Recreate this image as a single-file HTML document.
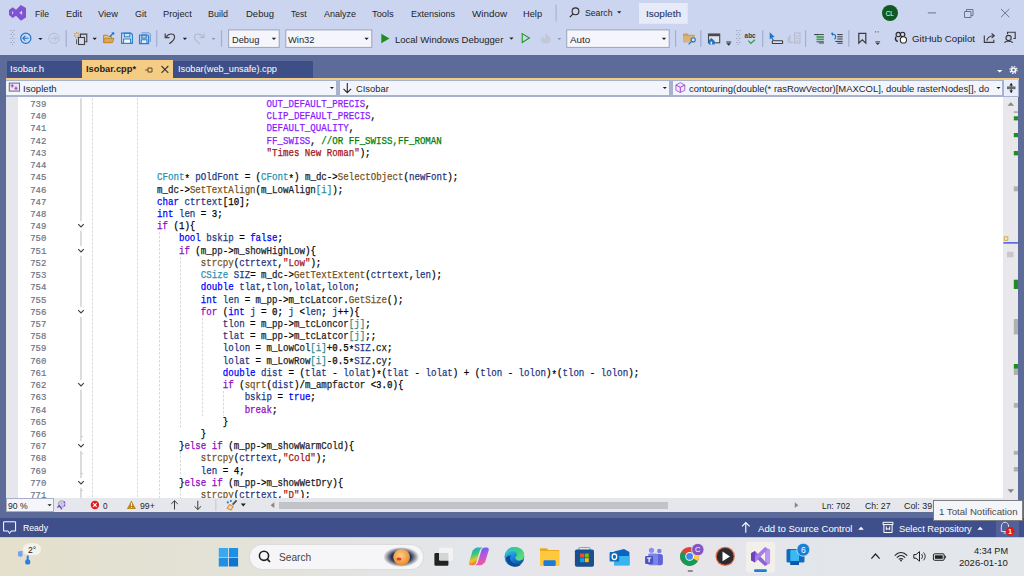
<!DOCTYPE html>
<html><head><meta charset="utf-8"><style>
*{margin:0;padding:0;box-sizing:border-box}
html,body{width:1024px;height:576px;overflow:hidden;background:#ccd5f0;position:relative;font-family:"Liberation Sans",sans-serif}
.a{position:absolute}
#t14{-webkit-text-stroke:0.12px #2a3768}
.t{position:absolute;white-space:pre;line-height:1;transform-origin:0 0;font-family:"Liberation Sans",sans-serif}
#code{position:absolute;left:156.6px;top:98.3px;width:846px;height:399.7px;overflow:visible}
.cl{position:absolute;left:0;white-space:pre;font-family:"Liberation Mono",monospace;font-size:10.2px;line-height:12.2222px;height:12.2222px;color:#000;transform:scaleX(0.89575);transform-origin:0 0;-webkit-text-stroke:0.25px currentColor}
.cl b{font-weight:400}
.cl i{font-style:normal;position:relative;top:2px}
.cl b.mac{color:#8a1bff}
.cl b.com{color:#008000}
.cl b.str{color:#a31515}
.cl b.typ{color:#2b91af}
.cl b.loc{color:#1f377f}
.cl b.mem{color:#1c1c28}
.cl b.fn{color:#74531f}
.cl b.kw{color:#0000ff}
.cl b.ctl{color:#8f08c4}
.cl b.par{color:#2e8b8b}

.ln{position:absolute;right:0;white-space:pre;font-family:"Liberation Mono",monospace;font-size:9.6px;transform:scaleX(0.93229);transform-origin:100% 0;-webkit-text-stroke:0.2px currentColor;line-height:12.2222px;height:12.2222px;color:#6e7484}
</style></head>
<body>
<!-- top area -->
<div class="a" style="left:0;top:0;width:1024px;height:55px;background:#ccd5f0"></div>
<!-- tab well -->
<div class="a" style="left:0;top:55px;width:1024px;height:463px;background:#5d6b99"></div>
<div class="a" style="left:7px;top:60.5px;width:75px;height:17.5px;background:#3e4f88"></div>
<div class="a" style="left:173.3px;top:60.5px;width:140px;height:17.5px;background:#3e4f88"></div>
<div class="a" style="left:81.8px;top:60px;width:91.5px;height:18px;background:#f5cc84"></div>
<div class="a" style="left:6px;top:77.8px;width:1012.5px;height:1.8px;background:#f5cc84"></div>
<!-- nav bar -->
<div class="a" style="left:6px;top:79.6px;width:1012.5px;height:17.8px;background:#a9b2cc"></div>
<div class="a" style="left:6px;top:80.6px;width:330.2px;height:14.8px;background:#f3f5fc"></div>
<div class="a" style="left:339.7px;top:80.6px;width:329.3px;height:14.8px;background:#f3f5fc"></div>
<div class="a" style="left:672.8px;top:80.6px;width:329.5px;height:14.8px;background:#f3f5fc"></div>
<div class="a" style="left:1003.8px;top:79.6px;width:14.5px;height:16.4px;background:#e8edfb"></div>
<!-- editor -->
<div class="a" style="left:6px;top:97.4px;width:997.4px;height:400.6px;background:#ffffff"></div>
<div class="a" style="left:6px;top:97.4px;width:12px;height:400.6px;background:#e6e7ed"></div>
<div class="a" style="left:1003.4px;top:97.4px;width:14.8px;height:400.6px;background:#e8e8ec"></div>
<div class="a" style="left:0;top:98.3px;width:46.3px;height:400px"><div class="ln" style="top:0.700px">739</div>
<div class="ln" style="top:12.700px">740</div>
<div class="ln" style="top:24.700px">741</div>
<div class="ln" style="top:37.700px">742</div>
<div class="ln" style="top:49.700px">743</div>
<div class="ln" style="top:61.700px">744</div>
<div class="ln" style="top:73.700px">745</div>
<div class="ln" style="top:86.700px">746</div>
<div class="ln" style="top:98.700px">747</div>
<div class="ln" style="top:110.700px">748</div>
<div class="ln" style="top:122.700px">749</div>
<div class="ln" style="top:134.700px">750</div>
<div class="ln" style="top:147.700px">751</div>
<div class="ln" style="top:159.700px">752</div>
<div class="ln" style="top:171.700px">753</div>
<div class="ln" style="top:183.700px">754</div>
<div class="ln" style="top:196.700px">755</div>
<div class="ln" style="top:208.700px">756</div>
<div class="ln" style="top:220.700px">757</div>
<div class="ln" style="top:232.700px">758</div>
<div class="ln" style="top:244.700px">759</div>
<div class="ln" style="top:257.700px">760</div>
<div class="ln" style="top:269.700px">761</div>
<div class="ln" style="top:281.700px">762</div>
<div class="ln" style="top:293.700px">763</div>
<div class="ln" style="top:306.700px">764</div>
<div class="ln" style="top:318.700px">765</div>
<div class="ln" style="top:330.700px">766</div>
<div class="ln" style="top:342.700px">767</div>
<div class="ln" style="top:354.700px">768</div>
<div class="ln" style="top:367.700px">769</div>
<div class="ln" style="top:379.700px">770</div>
<div class="ln" style="top:391.700px">771</div></div>
<div id="code"><div class="cl" style="top:0.700px">                    <b class="mac">OUT_DEFAULT_PRECIS</b>,</div>
<div class="cl" style="top:12.700px">                    <b class="mac">CLIP_DEFAULT_PRECIS</b>,</div>
<div class="cl" style="top:24.700px">                    <b class="mac">DEFAULT_QUALITY</b>,</div>
<div class="cl" style="top:37.700px">                    <b class="mac">FF_SWISS</b>, <b class="com">//OR FF_SWISS,FF_ROMAN</b></div>
<div class="cl" style="top:49.700px">                    <b class="str">"Times New Roman"</b>);</div>
<div class="cl" style="top:61.700px"></div>
<div class="cl" style="top:73.700px"><b class="typ">CFont</b><i>*</i> <b class="loc">pOldFont</b> = (<b class="typ">CFont</b><i>*</i>) <b class="mem">m_dc</b>-&gt;<b class="fn">SelectObject</b>(<b class="loc">newFont</b>);</div>
<div class="cl" style="top:86.700px"><b class="mem">m_dc</b>-&gt;<b class="fn">SetTextAlign</b>(<b class="mem">m_LowAlign</b><b class="par">[i]</b>);</div>
<div class="cl" style="top:98.700px"><b class="kw">char</b> <b class="loc">ctrtext</b>[10];</div>
<div class="cl" style="top:110.700px"><b class="kw">int</b> <b class="loc">len</b> = 3;</div>
<div class="cl" style="top:122.700px"><b class="ctl">if</b> (1){</div>
<div class="cl" style="top:134.700px">    <b class="kw">bool</b> <b class="loc">bskip</b> = <b class="kw">false</b>;</div>
<div class="cl" style="top:147.700px">    <b class="ctl">if</b> (<b class="mem">m_pp</b>-&gt;<b class="mem">m_showHighLow</b>){</div>
<div class="cl" style="top:159.700px">        <b class="fn">strcpy</b>(<b class="loc">ctrtext</b>,<b class="str">"Low"</b>);</div>
<div class="cl" style="top:171.700px">        <b class="typ">CSize</b> <b class="loc">SIZ</b>= <b class="mem">m_dc</b>-&gt;<b class="fn">GetTextExtent</b>(<b class="loc">ctrtext</b>,<b class="loc">len</b>);</div>
<div class="cl" style="top:183.700px">        <b class="kw">double</b> <b class="loc">tlat</b>,<b class="loc">tlon</b>,<b class="loc">lolat</b>,<b class="loc">lolon</b>;</div>
<div class="cl" style="top:196.700px">        <b class="kw">int</b> <b class="loc">len</b> = <b class="mem">m_pp</b>-&gt;<b class="mem">m_tcLatcor</b>.<b class="fn">GetSize</b>();</div>
<div class="cl" style="top:208.700px">        <b class="ctl">for</b> (<b class="kw">int</b> <b class="loc">j</b> = 0; <b class="loc">j</b> &lt;<b class="loc">len</b>; <b class="loc">j</b>++){</div>
<div class="cl" style="top:220.700px">            <b class="loc">tlon</b> = <b class="mem">m_pp</b>-&gt;<b class="mem">m_tcLoncor</b><b class="par">[j]</b>;</div>
<div class="cl" style="top:232.700px">            <b class="loc">tlat</b> = <b class="mem">m_pp</b>-&gt;<b class="mem">m_tcLatcor</b><b class="par">[j]</b>;;</div>
<div class="cl" style="top:244.700px">            <b class="loc">lolon</b> = <b class="mem">m_LowCol</b><b class="par">[i]</b>+0.5<i>*</i><b class="loc">SIZ</b>.<b class="mem">cx</b>;</div>
<div class="cl" style="top:257.700px">            <b class="loc">lolat</b> = <b class="mem">m_LowRow</b><b class="par">[i]</b>-0.5<i>*</i><b class="loc">SIZ</b>.<b class="mem">cy</b>;</div>
<div class="cl" style="top:269.700px">            <b class="kw">double</b> <b class="loc">dist</b> = (<b class="loc">tlat</b> - <b class="loc">lolat</b>)<i>*</i>(<b class="loc">tlat</b> - <b class="loc">lolat</b>) + (<b class="loc">tlon</b> - <b class="loc">lolon</b>)<i>*</i>(<b class="loc">tlon</b> - <b class="loc">lolon</b>);</div>
<div class="cl" style="top:281.700px">            <b class="ctl">if</b> (<b class="fn">sqrt</b>(<b class="loc">dist</b>)/<b class="mem">m_ampfactor</b> &lt;3.0){</div>
<div class="cl" style="top:293.700px">                <b class="loc">bskip</b> = <b class="kw">true</b>;</div>
<div class="cl" style="top:306.700px">                <b class="ctl">break</b>;</div>
<div class="cl" style="top:318.700px">            }</div>
<div class="cl" style="top:330.700px">        }</div>
<div class="cl" style="top:342.700px">    }<b class="ctl">else</b> <b class="ctl">if</b> (<b class="mem">m_pp</b>-&gt;<b class="mem">m_showWarmCold</b>){</div>
<div class="cl" style="top:354.700px">        <b class="fn">strcpy</b>(<b class="loc">ctrtext</b>,<b class="str">"Cold"</b>);</div>
<div class="cl" style="top:367.700px">        <b class="loc">len</b> = 4;</div>
<div class="cl" style="top:379.700px">    }<b class="ctl">else</b> <b class="ctl">if</b> (<b class="mem">m_pp</b>-&gt;<b class="mem">m_showWetDry</b>){</div>
<div class="cl" style="top:391.700px">        <b class="fn">strcpy</b>(<b class="loc">ctrtext</b>,<b class="str">"D"</b>);</div></div>
<!-- editor bottom bar -->
<div class="a" style="left:6px;top:498px;width:1012.3px;height:14px;background:#e6e7ed"></div>
<div class="a" style="left:6px;top:498px;width:47.6px;height:13.8px;background:#f5f6fc;border:1px solid #a8b0c8"></div>
<div class="a" style="left:279px;top:501.5px;width:389px;height:7.5px;background:#c2c3c9"></div>
<!-- status bar -->
<div class="a" style="left:0;top:517.6px;width:1024px;height:19.4px;background:#3f4f8c"></div>
<div class="a" style="left:995.5px;top:517.6px;width:23.5px;height:19.4px;background:#52619a"></div>
<!-- taskbar -->
<div class="a" style="left:0;top:537px;width:1024px;height:39px;background:linear-gradient(90deg,#e4e0cc 0%,#e3e2d6 20%,#e3e6ea 45%,#e8e5ea 60%,#e2e6ea 80%,#e4e7ea 100%)"></div>
<div class="a" style="left:0;top:537px;width:1024px;height:1px;background:#c9c8bc"></div>
<div class="a" style="left:250px;top:545px;width:172.5px;height:24px;border-radius:12px;background:#f6f5f7;box-shadow:0 0 0 1px #dcdcdc"></div>
<div class="a" style="left:746px;top:541.7px;width:29.3px;height:30.7px;border-radius:4px;background:#f0eef0"></div>
<!-- tooltip -->
<div class="a" style="left:933.3px;top:500.3px;width:89.8px;height:21px;background:#f4f5f8;border:1px solid #7e7e80"></div>
<svg class="a" style="left:0;top:0" width="1024" height="576" viewBox="0 0 1024 576"><path fill-rule="evenodd" fill="#8153d3" d="M20.8,5 L26,7.9 L26,17.4 L20.9,20.8 L16,15.8 L12.7,17.9 L9,15 L9,10 L12.7,7.2 L16,9.8 Z M12,11 L12,14.5 L13.6,12.8 Z M22.1,10.8 L22.1,14.9 L19.3,12.8 Z"/><rect x="555.6" y="4.5" width="1" height="17" fill="#a3add0"/><circle cx="575.5" cy="11.3" r="3.4" fill="none" stroke="#2b2b2b" stroke-width="1.1"/><path d="M573.1,13.8 L569.8,17.1" stroke="#2b2b2b" stroke-width="1.2"/><path d="M617.1,11.200000000000001 L621.3000000000001,11.200000000000001 L619.2,13.4 Z" fill="#1e1e1e"/><rect x="639" y="3" width="48.7" height="20.8" fill="#e6eaf9"/><circle cx="890" cy="13" r="8" fill="#0e5a22"/><text x="889.8" y="15.7" font-family="Liberation Sans" font-size="6.9" fill="#ffffff" text-anchor="middle" textLength="8" lengthAdjust="spacingAndGlyphs">CL</text><rect x="927.8" y="12.4" width="8.2" height="1" fill="#6a7390"/><path d="M964.5,11.5 h6.5 v6 h-6.5 Z M966.5,11.5 v-2 h6.5 v6 h-2" fill="none" stroke="#6a7390" stroke-width="1"/><path d="M1001,9 L1009.3,17.2 M1009.3,9 L1001,17.2" stroke="#6a7390" stroke-width="1"/><rect x="10.5" y="30" width="1" height="1" fill="#8890aa"/><rect x="13.5" y="30" width="1" height="1" fill="#8890aa"/><rect x="12.0" y="32" width="1" height="1" fill="#8890aa" fill-opacity="0.7"/><rect x="10.5" y="34" width="1" height="1" fill="#8890aa"/><rect x="13.5" y="34" width="1" height="1" fill="#8890aa"/><rect x="12.0" y="36" width="1" height="1" fill="#8890aa" fill-opacity="0.7"/><rect x="10.5" y="38" width="1" height="1" fill="#8890aa"/><rect x="13.5" y="38" width="1" height="1" fill="#8890aa"/><rect x="12.0" y="40" width="1" height="1" fill="#8890aa" fill-opacity="0.7"/><rect x="10.5" y="42" width="1" height="1" fill="#8890aa"/><rect x="13.5" y="42" width="1" height="1" fill="#8890aa"/><rect x="12.0" y="44" width="1" height="1" fill="#8890aa" fill-opacity="0.7"/><circle cx="25.8" cy="38.3" r="5.1" fill="none" stroke="#1f74c8" stroke-width="1.2"/><path d="M28.6,38.3 H23 M25.3,35.9 L22.9,38.3 L25.3,40.7" fill="none" stroke="#1f74c8" stroke-width="1.1"/><path d="M38.199999999999996,37.9 L42.6,37.9 L40.4,40.1 Z" fill="#1e1e1e"/><circle cx="53.9" cy="38.3" r="5.1" fill="none" stroke="#b6bccf" stroke-width="1"/><path d="M51.2,38.3 H56.6 M54.5,35.9 L56.9,38.3 L54.5,40.7" fill="none" stroke="#b6bccf" stroke-width="1"/><rect x="65.60000000000001" y="30.2" width="1.2" height="16.599999999999998" fill="#a3add0"/><circle cx="76.8" cy="35.1" r="2.2" fill="none" stroke="#d8a050" stroke-width="1.6" stroke-dasharray="1.1 0.6"/><circle cx="76.8" cy="35.1" r="0.7" fill="#ccd5f0"/><path d="M80.5,37 V34.1 H86.8 V41.7 H84.6" fill="none" stroke="#424242" stroke-width="1.1"/><rect x="78.5" y="37.5" width="6" height="7" fill="#d8dcea" stroke="#424242" stroke-width="1.1"/><path d="M76.6,39.2 V44.2" stroke="#5a5a5a" stroke-width="1"/><path d="M92.5,37.8 L96.9,37.8 L94.7,40.0 Z" fill="#1e1e1e"/><path d="M103.6,35.2 H107.3 L108.4,36.4 H111.3 V42.6 H103.6 Z" fill="#e3c08a" stroke="#c08428" stroke-width="1"/><path d="M104.4,38.3 H114 L112.6,42.6 H103.6 Z" fill="#d9a85a" stroke="#c08428" stroke-width="0.9"/><path d="M110,36.5 L113.2,33.2" stroke="#1f74c8" stroke-width="1.2"/><path d="M111.3,32.4 L114.3,32.2 L114.1,35.2 Z" fill="#1f74c8"/><path d="M121.6,33.1 H131 L132.4,34.5 V43.4 H121.6 Z" fill="#d5e2f4" stroke="#2b7bc8" stroke-width="1.1"/><rect x="124.3" y="33.2" width="5.6" height="3.6" fill="none" stroke="#2b7bc8" stroke-width="1"/><rect x="123.6" y="39" width="7" height="4.3" fill="#f4f7fc" stroke="#2b7bc8" stroke-width="1"/><path d="M141.5,32.9 H149.4 L150.3,33.8 V42 " fill="none" stroke="#5e9ad6" stroke-width="1"/><path d="M139.5,35 H147.5 L148.6,36.1 V43.6 H139.5 Z" fill="#b9d0ee" stroke="#2b7bc8" stroke-width="1.1"/><rect x="141.8" y="35.1" width="4.4" height="3" fill="none" stroke="#2b7bc8" stroke-width="1"/><rect x="141.3" y="39.8" width="5.6" height="3.6" fill="#eaf1fa" stroke="#2b7bc8" stroke-width="1"/><rect x="156.1" y="30.2" width="1.2" height="16.599999999999998" fill="#a3add0"/><path d="M166.2,37 C168.5,33.2 174.6,32.8 174.6,37.2 C174.6,39.4 172.5,41.5 169.3,43.8" fill="none" stroke="#424242" stroke-width="1.2"/><path d="M165.2,33.5 V37.6 H169.5" fill="none" stroke="#424242" stroke-width="1.2"/><path d="M182.75,37.85 L187.05,37.85 L184.9,39.949999999999996 Z" fill="#1e1e1e"/><path d="M202.9,37 C200.6,33.2 194.5,32.8 194.5,37.2 C194.5,39.4 196.6,41.5 199.8,43.8" fill="none" stroke="#b3b8ca" stroke-width="1.1"/><path d="M203.9,33.5 V37.6 H199.6" fill="none" stroke="#b3b8ca" stroke-width="1.1"/><path d="M211.5,37.9 L215.5,37.9 L213.5,39.9 Z" fill="#9096aa"/><rect x="220.9" y="30.2" width="1.2" height="16.599999999999998" fill="#a3add0"/><rect x="228.6" y="29.9" width="50.599999999999994" height="17.5" fill="#f5f6fc" stroke="#9aa2bd" stroke-width="1"/><path d="M271.7,37.8 L276.09999999999997,37.8 L273.9,40.0 Z" fill="#1e1e1e"/><rect x="285.8" y="29.9" width="86.0" height="17.5" fill="#f5f6fc" stroke="#9aa2bd" stroke-width="1"/><path d="M364.40000000000003,37.8 L368.8,37.8 L366.6,40.0 Z" fill="#1e1e1e"/><rect x="566.75" y="29.9" width="102.45000000000005" height="17.5" fill="#f5f6fc" stroke="#9aa2bd" stroke-width="1"/><path d="M661.8,37.8 L666.2,37.8 L664,40.0 Z" fill="#1e1e1e"/><path d="M381.3,33.8 L389.5,38.5 L381.3,43.2 Z" fill="#1e8f1e"/><path d="M509.29999999999995,37.6 L513.5,37.6 L511.4,39.800000000000004 Z" fill="#1e1e1e"/><path d="M522.2,33.6 L529.4,38 L522.2,42.4 Z" fill="none" stroke="#1e9a1e" stroke-width="1.1"/><path d="M545.5,33.5 C550,36 552,39 550,42 C548.5,44 543,44 541.2,41.8 C539.5,39.5 541.5,37 543,36.2 C543,38 544,38.5 545,38.5 C545.5,37 545,35 545.5,33.5 Z" fill="#c3c8d6"/><path d="M557.4,37.9 L561.4,37.9 L559.4,39.9 Z" fill="#9096aa"/><rect x="675.0" y="30.2" width="1.2" height="16.599999999999998" fill="#a3add0"/><path d="M683.1,33.5 H687.5 L688.5,34.8 H694.9 V42.3 H683.1 Z" fill="#c9a060"/><path d="M683.1,36 H694.9 V42.3 H683.1 Z" fill="#d8b478"/><circle cx="693.2" cy="39.8" r="2.1" fill="#dbe3f3" stroke="#1f74c8" stroke-width="1.1"/><path d="M691.7,41.3 L688.6,44.4" stroke="#1f74c8" stroke-width="1.2"/><rect x="700.1999999999999" y="30.2" width="1.2" height="16.599999999999998" fill="#a3add0"/><rect x="708.5" y="34" width="11.2" height="8.8" fill="#dfe3ef" stroke="#4a4a4a" stroke-width="1.1"/><rect x="708.5" y="34" width="11.2" height="2.2" fill="#4a4a4a"/><path d="M707.9,41 L711.3,38 L714.7,41 V44.4 H708.9 V41 Z" fill="#1f74c8"/><rect x="710.5" y="41.6" width="1.6" height="2.8" fill="#dbe8f7"/><rect x="726.2" y="41.5" width="5" height="1" fill="#2b2b2b"/><path d="M726.4000000000001,43.3 L731.0,43.3 L728.7,45.7 Z" fill="#2b2b2b"/><rect x="736.3" y="30" width="1" height="1" fill="#8890aa"/><rect x="739.3" y="30" width="1" height="1" fill="#8890aa"/><rect x="737.8" y="32" width="1" height="1" fill="#8890aa" fill-opacity="0.7"/><rect x="736.3" y="34" width="1" height="1" fill="#8890aa"/><rect x="739.3" y="34" width="1" height="1" fill="#8890aa"/><rect x="737.8" y="36" width="1" height="1" fill="#8890aa" fill-opacity="0.7"/><rect x="736.3" y="38" width="1" height="1" fill="#8890aa"/><rect x="739.3" y="38" width="1" height="1" fill="#8890aa"/><rect x="737.8" y="40" width="1" height="1" fill="#8890aa" fill-opacity="0.7"/><rect x="736.3" y="42" width="1" height="1" fill="#8890aa"/><rect x="739.3" y="42" width="1" height="1" fill="#8890aa"/><rect x="737.8" y="44" width="1" height="1" fill="#8890aa" fill-opacity="0.7"/><text x="744.6" y="38.2" font-family="Liberation Sans" font-weight="700" font-size="6.3" fill="#3a3a3a" textLength="11" lengthAdjust="spacingAndGlyphs">abc</text><path d="M748.3,40.6 L750.8,43.3 L755,39.8" fill="none" stroke="#2ea043" stroke-width="1.2"/><rect x="762.1" y="30.2" width="1.2" height="16.599999999999998" fill="#a3add0"/><path d="M769.7,32.3 L774.8,37 L772.3,37.3 L773.8,39.8 L772.6,40.3 L771.2,37.9 L769.7,39.4 Z" fill="#1f74c8"/><rect x="772.3" y="40.7" width="10.3" height="2.8" rx="0.6" fill="#dfe3ef" stroke="#3a3a3a" stroke-width="1.1"/><path d="M790,35 V42.5 H793.5 M788.2,37 V42.8" fill="none" stroke="#b4b9cb" stroke-width="1.1"/><rect x="794.5" y="33" width="5.5" height="10" fill="none" stroke="#b4b9cb" stroke-width="1"/><path d="M795.5,36 H799 M795.5,38.5 H799 M795.5,41 H799" stroke="#b4b9cb" stroke-width="0.9"/><rect x="805.0" y="30.2" width="1.2" height="16.599999999999998" fill="#a3add0"/><path d="M814.2,34.6 H818.5" stroke="#3a3a3a" stroke-width="1"/><rect x="816.5" y="36.2" width="7.4" height="1.6" fill="#2ea043"/><rect x="816.5" y="38.6" width="7.4" height="1.6" fill="#2ea043"/><path d="M816.5,41.8 H823.9 M819,43 H823.9" stroke="#3a3a3a" stroke-width="0.9"/><path d="M816.5,34.6 H823.9" stroke="#3a3a3a" stroke-width="0.9"/><path d="M832,34.6 C835.8,33.5 836.8,37 834.5,39.2" fill="none" stroke="#1f74c8" stroke-width="1.2"/><path d="M830.8,33 L833.2,32.6 L832.8,36 Z" fill="#1f74c8"/><path d="M837.3,34.6 H842.7 M837.3,36.8 H842.7 M837.3,39 H842.7 M835.3,41.4 H842.7 M837.3,43.2 H842.7" stroke="#3a3a3a" stroke-width="1"/><rect x="848.1999999999999" y="30.2" width="1.2" height="16.599999999999998" fill="#a3add0"/><path d="M858.8,33.3 H865.8 V43.2 L862.3,39.8 L858.8,43.2 Z" fill="none" stroke="#3a3a3a" stroke-width="1.2"/><rect x="875.2" y="31.4" width="1" height="1" fill="#3a3a3a"/><rect x="877.6" y="31.4" width="1" height="1" fill="#3a3a3a"/><rect x="875.3" y="41.4" width="4.8" height="0.9" fill="#3a3a3a"/><path d="M875.4000000000001,42.699999999999996 L880.0,42.699999999999996 L877.7,44.9 Z" fill="#3a3a3a"/><circle cx="898.3" cy="34.6" r="2.2" fill="none" stroke="#2a2a2a" stroke-width="1.1"/><circle cx="902.6" cy="34.4" r="2.2" fill="none" stroke="#2a2a2a" stroke-width="1.1"/><path d="M896.2,36.8 C895,38 895,40.5 897.8,41.6" fill="none" stroke="#2a2a2a" stroke-width="1.4"/><circle cx="903.4" cy="39.9" r="3.1" fill="#ffffff" stroke="#2a2a2a" stroke-width="1.1"/><path d="M984.3,35.5 V42.4 H993.8 V39.8" fill="none" stroke="#3a3a3a" stroke-width="1.1"/><path d="M986.8,40.6 C987.5,37.5 989.5,36 993.5,35.8 M991.6,33.5 L994.3,35.8 L991.6,38.2" fill="none" stroke="#3a3a3a" stroke-width="1.1"/><path d="M1007.5,34.2 V32.3 H1015.2 V38.5 H1013.5" fill="none" stroke="#3a3a3a" stroke-width="1.1"/><circle cx="1008.6" cy="38" r="2.6" fill="none" stroke="#3a3a3a" stroke-width="1.1"/><path d="M1004.6,42.8 C1005.2,40.8 1012,40.8 1012.6,42.8" fill="none" stroke="#3a3a3a" stroke-width="1.1"/><path d="M145.2,70 H148 M148,67.8 V72.2 M148,68 H152 V72 H148" fill="none" stroke="#5a4a2a" stroke-width="1"/><path d="M161.5,66 L168.3,72.8 M168.3,66 L161.5,72.8" stroke="#3a3a3a" stroke-width="1.1"/><path d="M997.0,69.9 L1002.4000000000001,69.9 L999.7,72.5 Z" fill="#ffffff"/><g transform="translate(1013.5,70)"><circle r="2.7" fill="#ffffff"/><circle r="3.5" fill="none" stroke="#ffffff" stroke-width="1.2" stroke-dasharray="1.4 1.35"/><circle r="1.2" fill="#5d6b99"/></g><rect x="9.3" y="83.1" width="10.2" height="8" fill="#e8e8ee" stroke="#6a6a6a" stroke-width="1"/><path d="M12.2,84.2 V87.4 M10.6,85.8 H13.8 M16,86.5 V90 M14.3,88.3 H17.7" stroke="#a43ad6" stroke-width="1.1"/><path d="M329.79999999999995,86.95 L334.0,86.95 L331.9,89.05 Z" fill="#1e1e1e"/><path d="M347.3,83 V92.5 M343.5,88.8 L347.3,92.6 L351.1,88.8" fill="none" stroke="#2b2b2b" stroke-width="1.1"/><path d="M662.6999999999999,86.95 L666.9,86.95 L664.8,89.05 Z" fill="#1e1e1e"/><path d="M680.3,82.6 L684.8,85 V90.3 L680.3,92.5 L675.9,90.3 V85 Z" fill="#f0eaf8" stroke="#a76cd9" stroke-width="1"/><path d="M675.9,85 L680.3,87.3 L684.8,85 M680.3,87.3 V92.5" fill="none" stroke="#a43ad6" stroke-width="1"/><path d="M996.4,86.95 L1000.6,86.95 L998.5,89.05 Z" fill="#1e1e1e"/><path d="M1011.2,83.5 V92.5" stroke="#2b2b2b" stroke-width="1.1"/><path d="M1009.3,85.4 L1011.2,83 L1013.1,85.4 Z M1009.3,90.6 L1011.2,93 L1013.1,90.6 Z" fill="#2b2b2b"/><rect x="1007" y="86.4" width="8.5" height="2.8" fill="#6a6a6a"/><rect x="80.3" y="98.30" width="1.3" height="122.70" fill="#cacaca"/><rect x="80.3" y="230.80" width="1.3" height="15.20" fill="#cacaca"/><rect x="80.3" y="255.80" width="1.3" height="51.20" fill="#cacaca"/><rect x="80.3" y="316.80" width="1.3" height="63.20" fill="#cacaca"/><rect x="80.3" y="389.80" width="1.3" height="51.20" fill="#cacaca"/><rect x="80.3" y="450.80" width="1.3" height="27.20" fill="#cacaca"/><rect x="80.3" y="487.80" width="1.3" height="10.20" fill="#cacaca"/><path d="M78.2,224.10 L81,226.90 L83.8,224.10" fill="none" stroke="#404040" stroke-width="1.15"/><path d="M78.2,249.10 L81,251.90 L83.8,249.10" fill="none" stroke="#404040" stroke-width="1.15"/><path d="M78.2,310.10 L81,312.90 L83.8,310.10" fill="none" stroke="#404040" stroke-width="1.15"/><path d="M78.2,383.10 L81,385.90 L83.8,383.10" fill="none" stroke="#404040" stroke-width="1.15"/><path d="M78.2,444.10 L81,446.90 L83.8,444.10" fill="none" stroke="#404040" stroke-width="1.15"/><path d="M78.2,481.10 L81,483.90 L83.8,481.10" fill="none" stroke="#404040" stroke-width="1.15"/><rect x="81" y="436.00" width="2.2" height="0.8" fill="#c6c6c6"/><rect x="81" y="473.00" width="2.2" height="0.8" fill="#c6c6c6"/><rect x="81" y="453.00" width="2.2" height="0.8" fill="#c6c6c6"/><rect x="81" y="490.00" width="2.2" height="0.8" fill="#c6c6c6"/><path d="M92.5,98.30 V498.00" stroke="#d9d9d9" stroke-width="1" stroke-dasharray="2.5 1.5"/><path d="M137.5,98.30 V498.00" stroke="#d9d9d9" stroke-width="1" stroke-dasharray="2.5 1.5"/><path d="M159.5,232.00 V498.00" stroke="#d9d9d9" stroke-width="1" stroke-dasharray="2.5 1.5"/><path d="M180.5,257.00 V428.00" stroke="#d9d9d9" stroke-width="1" stroke-dasharray="2.5 1.5"/><path d="M180.5,452.00 V477.00" stroke="#d9d9d9" stroke-width="1" stroke-dasharray="2.5 1.5"/><path d="M180.5,489.00 V498.00" stroke="#d9d9d9" stroke-width="1" stroke-dasharray="2.5 1.5"/><path d="M202.5,318.00 V416.00" stroke="#d9d9d9" stroke-width="1" stroke-dasharray="2.5 1.5"/><path d="M223.5,391.00 V416.00" stroke="#d9d9d9" stroke-width="1" stroke-dasharray="2.5 1.5"/><path d="M1007.5,105.8 L1014.0999999999999,105.8 L1010.8,102.2 Z" fill="#868686"/><path d="M1007.5,489.3 L1014.0999999999999,489.3 L1010.8,493.09999999999997 Z" fill="#868686"/><rect x="1013.8" y="111.2" width="4.2" height="1.8" fill="#b0b0b0"/><rect x="1013.8" y="116.3" width="4.2" height="4.1" fill="#1e8f1e"/><rect x="1013.8" y="133" width="4.2" height="4.2" fill="#1e8f1e"/><rect x="1013.8" y="151" width="4.2" height="4.4" fill="#1e8f1e"/><rect x="1013.8" y="186.4" width="4.2" height="4.9" fill="#b0b0b0"/><rect x="1013.8" y="279.7" width="4.2" height="9.3" fill="#1e8f1e"/><rect x="1013.8" y="319" width="4.2" height="15.4" fill="#b0b0b0"/><rect x="1013.8" y="364" width="4.2" height="4.8" fill="#1e8f1e"/><rect x="1013.8" y="368.8" width="4.2" height="6.2" fill="#b0b0b0"/><rect x="1013.8" y="403" width="4.2" height="4.7" fill="#b0b0b0"/><rect x="1013.8" y="450.9" width="4.2" height="3.8" fill="#b0b0b0"/><rect x="1013.8" y="467" width="4.2" height="4.5" fill="#b0b0b0"/><rect x="1004.3" y="236.8" width="3.5" height="3.5" fill="none" stroke="#d9a030" stroke-width="0.9"/><rect x="1003.4" y="242.3" width="14.8" height="1.2" fill="#1c3cd0"/><rect x="1007" y="251.7" width="6.5" height="5.6" fill="#c8c8cc"/><path d="M47.5,504.15 L51.7,504.15 L49.6,506.25 Z" fill="#1e1e1e"/><circle cx="61.8" cy="504" r="3.3" fill="#d6d8ea" stroke="#9ea2c4" stroke-width="1"/><path d="M60.2,503 H63.4 M61.8,503 V507" stroke="#aeb2cc" stroke-width="0.8"/><circle cx="64.4" cy="502.4" r="0.8" fill="#7a3ec8"/><circle cx="64.4" cy="505.4" r="0.8" fill="#7a3ec8"/><circle cx="58.5" cy="503.4" r="0.6" fill="#c080e8"/><path d="M57.4,507.6 L59.2,505.6 L61.2,508.4 L62,509.2" fill="none" stroke="#7a3ec8" stroke-width="1.3"/><circle cx="94.9" cy="505" r="4.2" fill="#e41b1b"/><path d="M93.1,503.2 L96.7,506.8 M96.7,503.2 L93.1,506.8" stroke="#ffffff" stroke-width="1.1"/><path d="M131.4,500.6 L136,509 H126.8 Z" fill="#c08a20"/><rect x="131" y="503" width="0.9" height="3" fill="#fff"/><rect x="131" y="507" width="0.9" height="0.9" fill="#fff"/><path d="M174.5,500.8 V509.5 M171.2,504 L174.5,500.8 L177.8,504" fill="none" stroke="#3a3a3a" stroke-width="1"/><path d="M197.8,500.8 V509.5 M194.5,506.3 L197.8,509.5 L201.1,506.3" fill="none" stroke="#3a3a3a" stroke-width="1"/><rect x="215.4" y="499.5" width="0.9" height="11" fill="#c2c4cc"/><path d="M236.6,500.4 L232.6,504.6" stroke="#505050" stroke-width="1.8"/><path d="M229.4,504.6 L233.2,506.4 L231,510 L227.2,508.2 Z" fill="#f0dcc0" stroke="#e09030" stroke-width="1.1"/><circle cx="227.8" cy="502.4" r="1.1" fill="#2a7ed0"/><circle cx="230.9" cy="501.1" r="1" fill="#2a6ac0"/><path d="M240.8,503.5 L245.8,503.5 L243.3,506.5 Z" fill="#1e1e1e"/><path d="M274.3,502.3 L270.6,505.2 L274.3,508.1 Z" fill="#868686"/><path d="M794.8,502.3 L798.3,505.2 L794.8,508.1 Z" fill="#868686"/><path d="M3.6,521.8 H15.6 V531 H11 L9.6,533.6 L8.2,531 H3.6 Z" fill="none" stroke="#ffffff" stroke-width="1"/><path d="M745.8,522.5 V532.7 M742,526.3 L745.8,522.5 L749.6,526.3" fill="none" stroke="#ffffff" stroke-width="1.1"/><path d="M858.2,529.7 L863.8,529.7 L861,526.7 Z" fill="#ffffff"/><path d="M883,522.3 H893 V524.6 H883 Z M883.9,524.6 V532.5 H892.1 V524.6" fill="none" stroke="#ffffff" stroke-width="1"/><path d="M886.3,526.5 V529.8 L888,528.6 L889.7,529.8 V526.5" fill="none" stroke="#ffffff" stroke-width="1"/><path d="M977.4000000000001,529.7 L983.0,529.7 L980.2,526.7 Z" fill="#ffffff"/><path d="M1001.3,531.5 V527 C1001.3,523.8 1003,522.3 1005,522.3 C1007,522.3 1008.7,523.8 1008.7,527 V531.5 H1001.3 Z M1003.6,533 H1006.4" fill="none" stroke="#d8dcf0" stroke-width="1"/><circle cx="1010.2" cy="531.2" r="4.4" fill="#d81e1e"/><text x="1010.2" y="533.6" font-family="Liberation Sans" font-weight="700" font-size="6.6" fill="#fff" text-anchor="middle">1</text><rect x="22.9" y="543.3" width="18.1" height="12" rx="6" fill="#f4f2ea"/><path d="M18,551.5 L22.5,550.8 L22.5,556 L20.5,557 L18,556 Z" fill="#7aa0f0"/><rect x="26.7" y="555.5" width="2" height="5.5" fill="#2a7ee0"/><circle cx="27.7" cy="561.9" r="2.6" fill="#2a7ee0"/><rect x="218.8" y="548" width="9.2" height="9" fill="#3aa8ee"/><rect x="228.9" y="548" width="9.2" height="9" fill="#1e8fe4"/><rect x="218.8" y="557.7" width="9.2" height="8.8" fill="#1e8fe4"/><rect x="228.9" y="557.7" width="9.2" height="8.8" fill="#0f74cf"/><circle cx="264" cy="555.8" r="4.6" fill="none" stroke="#222" stroke-width="1.6"/><path d="M267.3,559.2 L270,562" stroke="#222" stroke-width="1.8"/><defs><radialGradient id="gdark" cx="50%" cy="50%" r="50%"><stop offset="55%" stop-color="#2a3450"/><stop offset="100%" stop-color="#2a3450" stop-opacity="0"/></radialGradient><radialGradient id="gplan" cx="45%" cy="40%" r="60%"><stop offset="0%" stop-color="#ffd08a"/><stop offset="100%" stop-color="#e88a2a"/></radialGradient></defs><ellipse cx="401.2" cy="557" rx="18" ry="10" fill="url(#gdark)"/><circle cx="401.6" cy="557.2" r="8.3" fill="url(#gplan)"/><ellipse cx="399" cy="559" rx="2.5" ry="1.5" fill="#e03a2a"/><rect x="434.4" y="552.9" width="14" height="12.9" rx="1.2" fill="#222"/><rect x="439" y="547.8" width="14" height="12.9" rx="1.2" fill="#f4f4f4" fill-opacity="0.85"/><defs><linearGradient id="gcop" x1="0" y1="0" x2="0.3" y2="1"><stop offset="0" stop-color="#1a9bf0"/><stop offset="0.45" stop-color="#38c878"/><stop offset="0.75" stop-color="#f2c230"/><stop offset="1" stop-color="#f26a3a"/></linearGradient><linearGradient id="gcop2" x1="0" y1="0" x2="0.3" y2="1"><stop offset="0" stop-color="#3a6cf0"/><stop offset="0.5" stop-color="#b056e8"/><stop offset="1" stop-color="#f05a9a"/></linearGradient></defs><path d="M474.5,549 C475.3,548 476.5,547.5 478,547.5 H482.5 C481,548.2 480.2,549.5 479.7,551 L476.3,562.5 C475.7,564.3 474.3,565.3 472.5,565.3 H471 C469.3,565.3 468.6,564 469,562.5 L472.5,551 C472.9,550 473.5,549.5 474.5,549 Z" fill="url(#gcop)"/><path d="M483.2,563.8 C482.4,564.8 481.2,565.3 479.7,565.3 H475.2 C476.7,564.6 477.5,563.3 478,561.8 L481.4,550.3 C482,548.5 483.4,547.5 485.2,547.5 H486.7 C488.4,547.5 489.1,548.8 488.7,550.3 L485.2,561.8 C484.8,562.8 484.2,563.3 483.2,563.8 Z" fill="url(#gcop2)"/><defs><linearGradient id="gedge" x1="0.2" y1="0" x2="0.6" y2="1"><stop offset="0" stop-color="#3ccbf4"/><stop offset="0.5" stop-color="#1a8ae0"/><stop offset="1" stop-color="#0c4f9e"/></linearGradient><linearGradient id="ggreen" x1="0" y1="0" x2="1" y2="1"><stop offset="0" stop-color="#2fb8e8"/><stop offset="0.5" stop-color="#3ed07a"/><stop offset="1" stop-color="#6ce08a"/></linearGradient></defs><circle cx="514.4" cy="556.8" r="9.9" fill="url(#gedge)"/><path d="M509.5,548.3 C513,546.3 518.5,546.2 521.8,549.6 C524.8,552.6 524.8,557.5 522.5,559.6 C520.5,561.3 516.5,561 515.5,558.8 C514.8,557.5 516.2,556.3 516.8,555.6 C517.5,553.6 515.8,551.2 512.8,551.2 C509.5,551.2 506.5,553.8 505.6,556.8 C505.6,553 507,549.8 509.5,548.3 Z" fill="url(#ggreen)"/><path d="M505.8,558.5 C506.5,562.8 510.5,566.6 515.5,566.6 C518,566.6 520,565.8 521.5,564.5 C517.5,565.5 512.5,564 510.5,560.5 C509.5,558.5 510,556.5 511.5,555.5 C508.8,555.5 506.5,556.5 505.8,558.5 Z" fill="#0b4a94"/><path d="M540,548.2 H546.5 L548.5,550 H559.2 V566 H540 Z" fill="#e8a820"/><rect x="540" y="551" width="19.2" height="15" fill="#ffc83d"/><rect x="543.5" y="560.2" width="12.2" height="5.8" rx="1.2" fill="#1a7bd8"/><path d="M579,550 V548 C579,547.5 590,547.5 590,548 V550" fill="none" stroke="#40b0f0" stroke-width="1.1"/><rect x="574.9" y="549.5" width="19.1" height="17.2" rx="1.8" fill="#1b4e8c"/><rect x="580.1" y="553.5" width="4" height="4" fill="#f25022"/><rect x="584.8" y="553.5" width="4" height="4" fill="#7fba00"/><rect x="580.1" y="558.2" width="4" height="4" fill="#00a4ef"/><rect x="584.8" y="558.2" width="4" height="4" fill="#ffb900"/><path d="M614,551.5 L624,548.9 L629.4,552 V565.3 H614 Z" fill="#0a64c0"/><path d="M614,556 H629.4 V565.3 H614 Z" fill="#38b4f0"/><rect x="609.6" y="552" width="9.6" height="9.6" rx="1" fill="#0f6cbd"/><ellipse cx="614.4" cy="556.8" rx="2.3" ry="2.8" fill="none" stroke="#fff" stroke-width="1.3"/><circle cx="651.5" cy="550.3" r="2.6" fill="#8a90f0"/><circle cx="659.3" cy="551" r="2.2" fill="#7a80e0"/><rect x="655.5" y="554" width="7.4" height="11.3" rx="2.5" fill="#6064d8"/><rect x="648" y="553.5" width="10" height="11.8" rx="2" fill="#7b83eb"/><rect x="645.1" y="556" width="8" height="8" rx="1" fill="#4b53bc"/><path d="M646.9,558 H651.3 M649.1,558 V562.3" stroke="#fff" stroke-width="1.2"/><circle cx="689.6" cy="556.4" r="9.5" fill="#db4437"/><path d="M689.6,556.4 L681.4,561.1 A9.5,9.5 0 0 1 681.4,551.7 Z" fill="#0f9d58"/><path d="M689.6,556.4 L681.4,561.1 A9.5,9.5 0 0 0 697.8,561.1 Z" fill="#0f9d58"/><path d="M689.6,556.4 L697.8,561.1 A9.5,9.5 0 0 0 699.1,556.4 L698.3,552.3 Z" fill="#ffcd40"/><circle cx="689.6" cy="556.4" r="4.3" fill="#fff"/><circle cx="689.6" cy="556.4" r="3.4" fill="#4285f4"/><circle cx="697.8" cy="549.6" r="6.2" fill="#7e57c2" stroke="#e8e4f0" stroke-width="0.8"/><text x="697.8" y="552.3" font-family="Liberation Sans" font-size="7.5" fill="#fff" text-anchor="middle">C</text><rect x="687.6" y="570.2" width="5.4" height="1.6" rx="0.8" fill="#707070"/><circle cx="725.2" cy="556.4" r="9.6" fill="#e06a40"/><circle cx="725.2" cy="556.4" r="8.4" fill="#2c2a30"/><path d="M722.5,551.5 L730,556.4 L722.5,561.3 Z" fill="#ffffff"/><rect x="745.9" y="541.9" width="29.3" height="30.5" rx="3" fill="#f3f0ec"/><path d="M765,547 L770.1,549.5 V563.6 L765,566.1 Z" fill="#b896f2"/><path d="M751,553.2 L755,551 L767.5,563.8 L765,566.1 Z" fill="#8c62da"/><path d="M751,560.3 L755,562.6 L767.5,549.4 L765,547 Z" fill="#a57ce8"/><path d="M751,553.2 L755,551 V562.6 L751,560.3 Z" fill="#6b44b8"/><rect x="754" y="569.3" width="13" height="2.7" rx="1.35" fill="#1a7fd8"/><rect x="786.5" y="549" width="18" height="13.5" rx="1.5" fill="#0f6cbd"/><rect x="790.3" y="550" width="8.7" height="15" rx="1" fill="#3cb8f0"/><rect x="790.3" y="561" width="8.7" height="4" fill="#0a58a8"/><circle cx="803.3" cy="549.7" r="6.5" fill="#1a7fd8" stroke="#e6e6ea" stroke-width="0.8"/><text x="803.3" y="552.8" font-family="Liberation Sans" font-size="8.5" fill="#fff" text-anchor="middle">6</text><path d="M871.4,558.6 L875.5,554 L879.6,558.6" fill="none" stroke="#222" stroke-width="1.2"/><path d="M894.8,555.6 C898.5,551.5 903.5,551.5 907.2,555.6 M896.8,557.6 C899.4,555 902.6,555 905.2,557.6 M898.8,559.4 C900.2,558.2 901.8,558.2 903.2,559.4" fill="none" stroke="#222" stroke-width="1.1"/><circle cx="901" cy="560.5" r="0.9" fill="#222"/><path d="M913.8,554.6 H916 L919.5,551.6 V561.2 L916,558.2 H913.8 Z" fill="none" stroke="#222" stroke-width="1"/><path d="M921.5,554 C922.8,555.5 922.8,557.3 921.5,558.8 M923.5,552.5 C925.7,555 925.7,557.8 923.5,560.3" fill="none" stroke="#222" stroke-width="1"/><rect x="933.4" y="553.8" width="10.8" height="6.5" rx="1.2" fill="none" stroke="#222" stroke-width="1"/><rect x="934.9" y="555.3" width="7.8" height="3.5" fill="#222"/><rect x="944.6" y="555.8" width="1.2" height="2.5" fill="#222"/></svg>
<span class="t" id="t0" style="left:35.00px;top:8.73px;font-size:9.884px;color:#1e1e1e;font-weight:400;transform:scaleX(0.8793)">File</span>
<span class="t" id="t1" style="left:65.50px;top:8.73px;font-size:9.884px;color:#1e1e1e;font-weight:400;transform:scaleX(0.9394)">Edit</span>
<span class="t" id="t2" style="left:98.00px;top:8.73px;font-size:9.884px;color:#1e1e1e;font-weight:400;transform:scaleX(0.9419)">View</span>
<span class="t" id="t3" style="left:134.50px;top:8.73px;font-size:9.884px;color:#1e1e1e;font-weight:400;transform:scaleX(0.9109)">Git</span>
<span class="t" id="t4" style="left:162.75px;top:8.73px;font-size:9.884px;color:#1e1e1e;font-weight:400;transform:scaleX(0.9354)">Project</span>
<span class="t" id="t5" style="left:208.25px;top:8.73px;font-size:9.884px;color:#1e1e1e;font-weight:400;transform:scaleX(0.9104)">Build</span>
<span class="t" id="t6" style="left:245.50px;top:8.73px;font-size:9.884px;color:#1e1e1e;font-weight:400;transform:scaleX(0.9619)">Debug</span>
<span class="t" id="t7" style="left:291.00px;top:8.73px;font-size:9.884px;color:#1e1e1e;font-weight:400;transform:scaleX(0.8552)">Test</span>
<span class="t" id="t8" style="left:323.50px;top:8.73px;font-size:9.884px;color:#1e1e1e;font-weight:400;transform:scaleX(0.9106)">Analyze</span>
<span class="t" id="t9" style="left:372.25px;top:8.73px;font-size:9.884px;color:#1e1e1e;font-weight:400;transform:scaleX(0.9431)">Tools</span>
<span class="t" id="t10" style="left:410.60px;top:8.73px;font-size:9.884px;color:#1e1e1e;font-weight:400;transform:scaleX(0.9128)">Extensions</span>
<span class="t" id="t11" style="left:471.60px;top:8.73px;font-size:9.884px;color:#1e1e1e;font-weight:400;transform:scaleX(0.9964)">Window</span>
<span class="t" id="t12" style="left:523.40px;top:8.73px;font-size:9.884px;color:#1e1e1e;font-weight:400;transform:scaleX(0.9403)">Help</span>
<span class="t" id="t13" style="left:585.00px;top:7.93px;font-size:9.884px;color:#1e1e1e;font-weight:400;transform:scaleX(0.8787)">Search</span>
<span class="t" id="t14" style="left:645.75px;top:9.08px;font-size:9.593px;color:#2a3768;font-weight:400;transform:scaleX(1.0433)">Isopleth</span>
<span class="t" id="t15" style="left:231.70px;top:34.78px;font-size:9.593px;color:#1e1e1e;font-weight:400;transform:scaleX(0.9669)">Debug</span>
<span class="t" id="t16" style="left:288.30px;top:34.78px;font-size:9.593px;color:#1e1e1e;font-weight:400;transform:scaleX(0.9758)">Win32</span>
<span class="t" id="t17" style="left:395.30px;top:34.78px;font-size:9.593px;color:#1e1e1e;font-weight:400;transform:scaleX(0.9922)">Local Windows Debugger</span>
<span class="t" id="t18" style="left:569.70px;top:34.78px;font-size:9.593px;color:#1e1e1e;font-weight:400;transform:scaleX(1.0295)">Auto</span>
<span class="t" id="t19" style="left:912.00px;top:33.68px;font-size:9.593px;color:#1e1e1e;font-weight:400;transform:scaleX(1.0113)">GitHub Copilot</span>
<span class="t" id="t20" style="left:10.30px;top:65.37px;font-size:9.012px;color:#ffffff;font-weight:400;transform:scaleX(1.0646)">Isobar.h</span>
<span class="t" id="t21" style="left:86.00px;top:65.37px;font-size:9.012px;color:#1e1e1e;font-weight:700;transform:scaleX(1.0306)">Isobar.cpp*</span>
<span class="t" id="t22" style="left:177.50px;top:65.37px;font-size:9.012px;color:#ffffff;font-weight:400;transform:scaleX(1.0252)">Isobar(web_unsafe).cpp</span>
<span class="t" id="t23" style="left:22.50px;top:84.97px;font-size:9.012px;color:#1e1e1e;font-weight:400;transform:scaleX(1.0688)">Isopleth</span>
<span class="t" id="t24" style="left:355.70px;top:84.97px;font-size:9.012px;color:#1e1e1e;font-weight:400;transform:scaleX(1.0408)">CIsobar</span>
<span class="t" id="t25" style="left:689.40px;top:84.97px;font-size:9.012px;color:#1e1e1e;font-weight:400;transform:scaleX(1.0476)">contouring(double(* rasRowVector)[MAXCOL], double rasterNodes[], do</span>
<span class="t" id="t26" style="left:7.60px;top:501.73px;font-size:9.302px;color:#1e1e1e;font-weight:400;transform:scaleX(0.9291)">90 %</span>
<span class="t" id="t27" style="left:103.40px;top:501.73px;font-size:9.302px;color:#1e1e1e;font-weight:400;transform:scaleX(0.8701)">0</span>
<span class="t" id="t28" style="left:140.20px;top:501.73px;font-size:9.302px;color:#1e1e1e;font-weight:400;transform:scaleX(0.9378)">99+</span>
<span class="t" id="t29" style="left:821.70px;top:501.73px;font-size:9.302px;color:#1e1e1e;font-weight:400;transform:scaleX(0.9055)">Ln: 702</span>
<span class="t" id="t30" style="left:864.50px;top:501.73px;font-size:9.302px;color:#1e1e1e;font-weight:400;transform:scaleX(0.9304)">Ch: 27</span>
<span class="t" id="t31" style="left:904.30px;top:501.73px;font-size:9.302px;color:#1e1e1e;font-weight:400;transform:scaleX(0.9536)">Col: 39</span>
<span class="t" id="t32" style="left:939.00px;top:508.49px;font-size:8.866px;color:#4a4a4a;font-weight:400;transform:scaleX(1.0881)">1 Total Notification</span>
<span class="t" id="t33" style="left:22.70px;top:524.12px;font-size:8.721px;color:#ffffff;font-weight:400;transform:scaleX(0.9919)">Ready</span>
<span class="t" id="t34" style="left:757.80px;top:524.83px;font-size:9.302px;color:#ffffff;font-weight:400;transform:scaleX(1.0319)">Add to Source Control</span>
<span class="t" id="t35" style="left:899.00px;top:524.83px;font-size:9.302px;color:#ffffff;font-weight:400;transform:scaleX(0.9978)">Select Repository</span>
<span class="t" id="t36" style="left:278.60px;top:551.55px;font-size:11.047px;color:#444444;font-weight:400;transform:scaleX(0.9212)">Search</span>
<span class="t" id="t37" style="left:28.10px;top:546.22px;font-size:8.721px;color:#222222;font-weight:400;transform:scaleX(0.9828)">2°</span>
<span class="t" id="t38" style="left:974.10px;top:547.46px;font-size:8.43px;color:#1a1a1a;font-weight:400;transform:scaleX(1.0869)">4:34 PM</span>
<span class="t" id="t39" style="left:959.40px;top:558.77px;font-size:9.012px;color:#1a1a1a;font-weight:400;transform:scaleX(1.0598)">2026-01-10</span>
</body></html>
